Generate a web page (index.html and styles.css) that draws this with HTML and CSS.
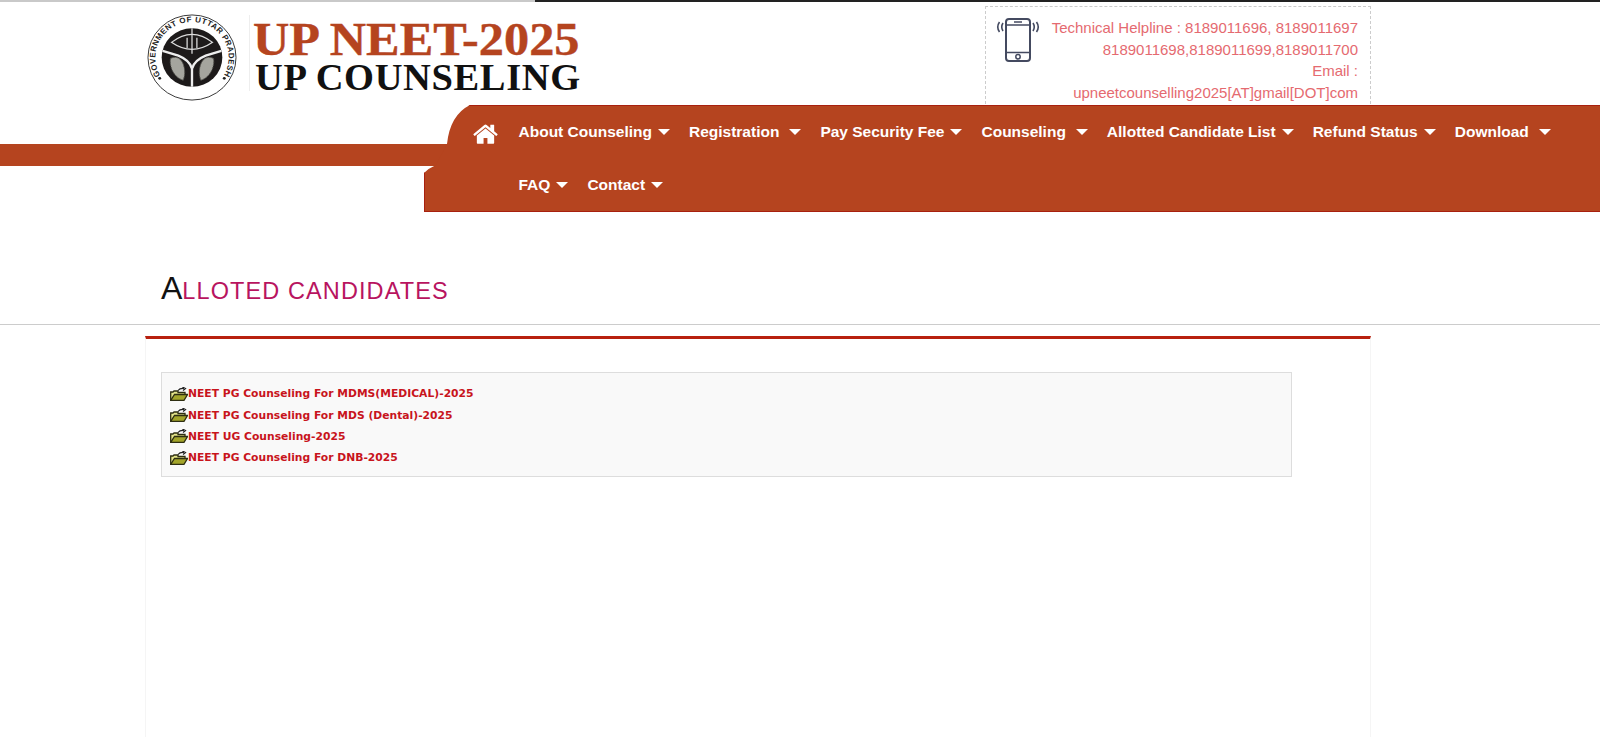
FILE: index.html
```html
<!DOCTYPE html>
<html lang="en">
<head>
<meta charset="utf-8">
<title>UP NEET-2025 UP Counseling</title>
<link rel="stylesheet" href="styles.css">
</head>
<body>
<div class="topline"></div>
<header class="header">
  <a class="logo" href="#">
    <svg class="emblem" viewBox="0 0 92 92" width="90" height="87" preserveAspectRatio="none" aria-hidden="true">
      <circle cx="46" cy="46" r="45" fill="#fff" stroke="#333" stroke-width="1"/>
      <circle cx="46" cy="46" r="31" fill="#1d1a1a"/>
      <defs><path id="arc" d="M46 83.500 A37.500 37.500 0 1 1 46.010 83.500"/></defs>
      <text class="emblem-text"><textPath href="#arc" startOffset="50%" text-anchor="middle">GOVERNMENT OF UTTAR PRADESH</textPath></text>
      <circle cx="13" cy="68" r="1.500" fill="#222"/>
      <circle cx="79" cy="68" r="1.500" fill="#222"/>
      <path d="M46 77 V58 Q44 49 32 44 L16 39 M46 58 Q48 49 60 44 L76 39" stroke="#eee" stroke-width="2.400" fill="none"/>
      <path d="M25 30 Q46 13 67 30 Q46 45 25 30Z" fill="none" stroke="#ddd" stroke-width="1.300"/>
      <path d="M46 15 V42 M41 25 V36 M51 25 V36" stroke="#ddd" stroke-width="1.300" fill="none"/>
      <path d="M24 47 Q33 43 37 53 Q40 62 37 70 Q30 68 26 60 Q23 53 24 47Z" fill="#a5a59e" stroke="#55554f" stroke-dasharray="2 1"/>
      <path d="M68 47 Q59 43 55 53 Q52 62 55 70 Q62 68 66 60 Q69 53 68 47Z" fill="#a5a59e" stroke="#55554f" stroke-dasharray="2 1"/>
    </svg>
    <span class="logo-rule"></span>
    <span class="logo-words">
      <span class="logo-main">UP NEET-2025</span>
      <span class="logo-sub">UP COUNSELING</span>
    </span>
  </a>
  <div class="help">
    <svg class="phone" viewBox="0 0 44 44" width="44" height="44" fill="none" stroke="#444a60" aria-hidden="true">
      <rect x="10" y="1" width="24" height="42" rx="3" stroke-width="2"/>
      <path d="M11 7H33M11 34.500H33" stroke-width="1.500"/>
      <path d="M18 4H26" stroke-width="1.500"/>
      <circle cx="22" cy="38.800" r="2.200" stroke-width="1.500"/>
      <path d="M7 5Q4.500 9 7 13M3.500 4Q0 9 3.500 14M37 5Q39.500 9 37 13M40.500 4Q44 9 40.500 14" stroke-width="1.600"/>
    </svg>
    <p class="help-text">Technical Helpline : 8189011696, 8189011697<br>8189011698,8189011699,8189011700<br>Email :<br>upneetcounselling2025[AT]gmail[DOT]com</p>
  </div>
</header>
<div class="navband">
  <div class="band"></div>
  <nav class="nav">
    <a class="home" href="#" aria-label="Home">
      <svg viewBox="64 220 1664 1320" width="25" height="20" aria-hidden="true"><path fill="#fff" d="M1472 992v480q0 26-19 45t-45 19h-384v-384h-256v384h-384q-26 0-45-19t-19-45v-480q0-1 .5-3t.5-3l575-474 575 474q1 2 1 6zm223-69l-62 74q-8 9-21 11h-3q-13 0-21-7l-692-577-692 577q-12 8-24 7-13-2-21-11l-62-74q-8-10-7-23.500t11-21.500l719-599q32-26 76-26t76 26l244 204v-195q0-14 9-23t23-9h192q14 0 23 9t9 23v408l219 182q10 8 11 21.500t-7 23.500z"/></svg>
    </a>
    <ul class="menu">
      <li><a href="#">About Counseling<i class="caret"></i></a></li>
      <li><a href="#">Registration<i class="caret wide"></i></a></li>
      <li><a href="#">Pay Security Fee<i class="caret"></i></a></li>
      <li><a href="#">Counseling<i class="caret wide"></i></a></li>
      <li><a href="#">Allotted Candidate List<i class="caret"></i></a></li>
      <li><a href="#">Refund Status<i class="caret"></i></a></li>
      <li><a href="#">Download<i class="caret wide"></i></a></li>
      <li><a href="#">FAQ<i class="caret"></i></a></li>
      <li><a href="#">Contact<i class="caret"></i></a></li>
    </ul>
  </nav>
</div>
<h1 class="title"><span class="title-first">A</span>LLOTED CANDIDATES</h1>
<hr class="rule">
<main class="panel">
  <ul class="tree">
    <li><svg class="folder" width="18" height="14" aria-hidden="true"><use href="#f"/></svg><a href="#">NEET PG Counseling For MDMS(MEDICAL)-2025</a></li>
    <li><svg class="folder" width="18" height="14" aria-hidden="true"><use href="#f"/></svg><a href="#">NEET PG Counseling For MDS (Dental)-2025</a></li>
    <li><svg class="folder" width="18" height="14" aria-hidden="true"><use href="#f"/></svg><a href="#">NEET UG Counseling-2025</a></li>
    <li><svg class="folder" width="18" height="14" aria-hidden="true"><use href="#f"/></svg><a href="#">NEET PG Counseling For DNB-2025</a></li>
  </ul>
</main>
<svg class="defs" width="0" height="0" aria-hidden="true">
  <symbol id="f" viewBox="0 0 18 14">
    <path d="M.7 13.300 V5 H3 L4 4 H8 V5.500 H15 V8" fill="#e6e68c" stroke="#2e2e12" stroke-width="1.300"/>
    <path d="M.7 13.300 L4.500 7.500 H17.500 L14 13.300Z" fill="#a3a52a" stroke="#2e2e12" stroke-width="1.300"/>
    <path d="M8 3.500 Q10 1 14 1.500 M12.500 0 L15.500 1.500 L13 3.500" fill="none" stroke="#222" stroke-width="1.200"/>
  </symbol>
</svg>
</body>
</html>
```

FILE: styles.css
```css
* { box-sizing: border-box; }
html, body { margin: 0; padding: 0; }
body { height: 737px; overflow: hidden; background: #fff; font-family: "Liberation Sans", Arial, sans-serif; color: #222; }
a { text-decoration: none; color: inherit; }
ul { list-style: none; margin: 0; padding: 0; }

.topline { height: 2px; background: linear-gradient(to right, #c9c9c9 0 535px, #222 535px); }
.header { height: 103px; padding: 0 229px 0 147px; display: flex; justify-content: space-between; }
.logo { display: flex; align-items: flex-start; padding-top: 12px; }
.emblem { flex: none; }
.emblem-text { font: bold 8.200px "Liberation Sans", sans-serif; fill: #222; letter-spacing: .5px; }
.logo-rule { width: 1px; height: 76px; background: #eee; margin-left: 12px; margin-top: 1px; }
.logo-words { display: flex; flex-direction: column; margin-left: 3px; }
.logo-main { font: bold 45.500px/36px "Liberation Serif", serif; color: #b5441f; margin-top: 8px; white-space: nowrap; transform: scaleX(1.105); transform-origin: left center; -webkit-text-stroke: .4px #b5441f; }
.logo-sub { font: bold 38.500px/30px "Liberation Serif", serif; color: #111; margin-top: 4px; white-space: nowrap; padding-left: 2px; letter-spacing: .62px; }
.help { width: 386px; height: 103px; margin-top: 4px; border: 1px dashed #ccc; border-bottom: 0; display: flex; padding: 10px 12px 0 10px; justify-content: space-between; }
.phone { flex: none; margin-top: 1px; }
.help-text { margin: 0; font-size: 15px; line-height: 21.500px; color: #e56a70; text-align: right; white-space: nowrap; }

.navband { position: relative; height: 107px; }
.band { position: absolute; left: 0; width: 450px; top: 39px; height: 22px; background: #b5441f; }
.nav { position: absolute; left: 424px; right: 0; top: 0; height: 107px; background: #b5441f; border-top: 1px solid #a8200f; border-bottom: 1px solid #a8200f; border-left: 1px solid #a8200f; display: flex; clip-path: path("M0 68 Q5 63 12 60 L23 39 Q26 10 46 0 L1176 0 L1176 107 L0 107Z"); }
.home { flex: none; width: 70px; padding: 18px 0 0 48px; }
.menu { display: flex; flex-wrap: wrap; align-content: flex-start; padding-left: 23.500px; }
.menu li { height: 53px; display: flex; align-items: center; padding-bottom: 2px; margin-right: 19px; }
.menu a { font-size: 15.500px; font-weight: bold; color: #fff; white-space: nowrap; display: flex; align-items: center; }
.caret { width: 0; height: 0; margin-left: 6px; margin-top: 1px; border: 6px solid transparent; border-top: 6px solid #fff; border-bottom: 0; }
.caret.wide { margin-left: 10px; }

.title { margin: 0; height: 112px; padding: 60px 0 0 161px; font-weight: normal; font-size: 23.500px; line-height: 32px; letter-spacing: 1.100px; color: #b8145f; }
.title-first { font-size: 32px; color: #111; letter-spacing: 0; }
.rule { margin: 0; border: 0; border-top: 1px solid #ccc; }
.panel { margin: 11px 229px 0 145px; height: 402px; border-top: 3px solid #b8200f; border-left: 1px solid #f5f5f5; border-right: 1px solid #f5f5f5; padding: 33px 0 0 15px; }
.tree { width: 1131px; height: 105px; background: #f9f9f9; border: 1px solid #ddd; padding: 10px 0 0 8px; }
.tree li { height: 21.400px; display: flex; align-items: center; font: bold 10.750px "DejaVu Sans", Verdana, sans-serif; color: #c8141c; }
.folder { flex: none; }
.defs { position: absolute; }
```
